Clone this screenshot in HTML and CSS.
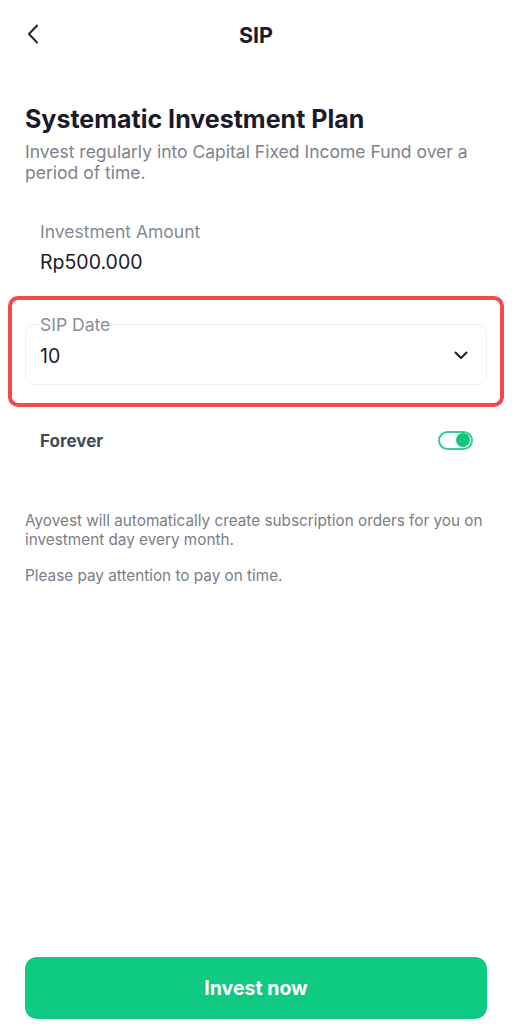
FILE: index.html
```html
<!DOCTYPE html>
<html>
<head>
<meta charset="utf-8">
<link rel="stylesheet" href="styles.css">
</head>
<body>
<div class="page">
  <header class="topbar">
    <span class="back">
      <svg width="12" height="20" viewBox="0 0 12 20"><path d="M10 1.5 L2 10 L10 18.5" fill="none" stroke="#2b2140" stroke-width="2" stroke-linecap="round" stroke-linejoin="round"/></svg>
    </span>
    <h1 class="topbar-title">SIP</h1>
  </header>

  <section class="intro">
    <h2 class="title">Systematic Investment Plan</h2>
    <p class="subtitle">Invest regularly into Capital Fixed Income Fund over a period of time.</p>
  </section>

  <section class="field">
    <div class="field-label">Investment Amount</div>
    <div class="field-value">Rp500.000</div>
  </section>

  <div class="highlight">
    <div class="select">
      <span class="select-label">SIP Date</span>
      <span class="select-value">10</span>
      <svg class="chev" width="14" height="9" viewBox="0 0 14 9"><path d="M1.5 1.5 L7 7 L12.5 1.5" fill="none" stroke="#1f1d2b" stroke-width="2" stroke-linecap="round" stroke-linejoin="round"/></svg>
    </div>
  </div>

  <div class="toggle-row">
    <span class="toggle-label">Forever</span>
    <span class="toggle"><span class="knob"></span></span>
  </div>

  <section class="notes">
    <p>Ayovest will automatically create subscription orders for you on investment day every month.</p>
    <p>Please pay attention to pay on time.</p>
  </section>

  <div class="spacer"></div>

  <button class="cta">Invest now</button>
</div>
</body>
</html>
```

FILE: styles.css
```css
* { box-sizing: border-box; }
html, body { margin: 0; padding: 0; background: #fff; }
body { font-family: Inter, "Noto Sans", sans-serif; color: #1c1b29; }
.page {
  width: 512px;
  height: 1024px;
  display: flex;
  flex-direction: column;
  padding: 0 25px 5px;
}
.topbar {
  height: 70px;
  display: flex;
  align-items: center;
  justify-content: center;
  position: relative;
}
.back {
  position: absolute;
  left: 2px;
  top: 24px;
  display: flex;
}
.topbar-title {
  margin: 0;
  font-size: 21.5px;
  font-weight: 700;
  color: #1c1b29;
}
.intro { margin-top: 34px; }
.title {
  margin: 0;
  font-size: 25px;
  font-weight: 700;
  line-height: 30px;
  color: #1a1a28;
}
.subtitle {
  margin: 7px 0 0;
  font-size: 17.5px;
  line-height: 21px;
  color: #80828d;
}
.field { padding: 38px 15px 0; }
.field-label { font-size: 17.5px; line-height: 22px; color: #868a94; }
.field-value { font-size: 19.5px; line-height: 24px; margin-top: 7px; color: #1c1b29; }
.highlight {
  margin: 22px -17px 0;
  border: 4px solid #f24949;
  border-radius: 10px;
  padding: 24px 13px 18px;
}
.select {
  height: 61px;
  border: 1px solid #efeff2;
  border-radius: 9px;
  position: relative;
  display: flex;
  align-items: center;
  padding: 3px 18px 0 14px;
}
.select-label {
  position: absolute;
  left: 14px;
  top: -10px;
  font-size: 17.5px;
  line-height: 20px;
  color: #8a8d96;
  background: #fff;
}
.select-value { flex: 1; font-size: 19.5px; color: #1c1b29; }
.chev { margin-top: -2px; }
.toggle-row {
  margin-top: 22px;
  padding: 0 15px;
  display: flex;
  align-items: center;
  justify-content: space-between;
  height: 24px;
}
.toggle-label { font-size: 17px; font-weight: 700; color: #434a56; }
.toggle {
  width: 35px;
  height: 19px;
  border: 2px solid #33cf92;
  border-radius: 10px;
  display: flex;
  justify-content: flex-end;
  align-items: center;
  padding: 0 1px;
  margin-right: -1px;
  margin-top: -2px;
}
.knob { width: 14px; height: 14px; border-radius: 50%; background: #12c57f; }
.notes { margin-top: 58px; }
.notes p {
  margin: 0 0 17px;
  font-size: 15.3px;
  line-height: 19px;
  color: #7a7d87;
}
.spacer { flex: 1; }
.cta {
  height: 62px;
  border: none;
  border-radius: 12px;
  background: #0fca82;
  color: #fff;
  font-family: Inter, "Noto Sans", sans-serif;
  font-size: 19.5px;
  font-weight: 700;
  width: 100%;
}
```
